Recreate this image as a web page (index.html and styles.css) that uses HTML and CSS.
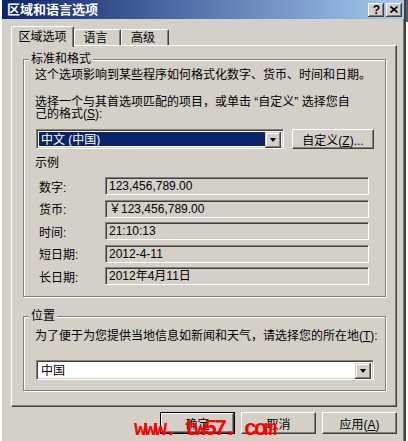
FILE: index.html
```html
<!DOCTYPE html>
<html lang="zh-CN">
<head>
<meta charset="UTF-8" />
<meta name="viewport" content="width=device-width, initial-scale=1" />
<title>区域和语言选项</title>
<link rel="stylesheet" href="styles.css">
</head>
<body>

<div class="window">
  <div class="titlebar">
    <span class="title">区域和语言选项</span>
    <div class="caption-btns">
      <span class="cbtn cbtn-help">?</span>
      <span class="cbtn">
        <svg width="8" height="7" viewBox="0 0 8 7">
          <path d="M0.5 0.5 L7.5 6.5 M7.5 0.5 L0.5 6.5" stroke="#000" stroke-width="1.6" fill="none" />
        </svg>
      </span>
    </div>
  </div>

  <div class="body">
    <div class="tabs">
      <div class="tab active">区域选项</div>
      <div class="tab tab-lang">语言</div>
      <div class="tab tab-adv">高级</div>
    </div>

    <div class="panel">
      <div class="group group-format">
        <span class="legend">标准和格式</span>
        <p class="desc">这个选项影响到某些程序如何格式化数字、货币、时间和日期。</p>
        <p class="desc desc-pick">选择一个与其首选项匹配的项目，或单击 “自定义” 选择您自<br>己的格式(<u>S</u>):</p>

        <div class="pick-row">
          <div class="combo combo-locale">
            <span class="combo-value selected">中文 (中国)</span>
            <span class="combo-arrow"><span class="tri"></span></span>
          </div>
          <button class="btn btn-custom">自定义(<u>Z</u>)...</button>
        </div>

        <div class="sample-title">示例</div>
        <div class="samples">
          <div class="sample"><span class="sample-label">数字:</span><span class="field">123,456,789.00</span></div>
          <div class="sample"><span class="sample-label">货币:</span><span class="field">￥123,456,789.00</span></div>
          <div class="sample"><span class="sample-label">时间:</span><span class="field">21:10:13</span></div>
          <div class="sample"><span class="sample-label">短日期:</span><span class="field">2012-4-11</span></div>
          <div class="sample"><span class="sample-label">长日期:</span><span class="field">2012年4月11日</span></div>
        </div>
      </div>

      <div class="group group-loc">
        <span class="legend">位置</span>
        <p class="desc">为了便于为您提供当地信息如新闻和天气，请选择您的所在地(<u>T</u>):</p>
        <div class="combo combo-loc">
          <span class="combo-value">中国</span>
          <span class="combo-arrow"><span class="tri"></span></span>
        </div>
      </div>
    </div>

    <div class="actions">
      <button class="btn btn-default">确定</button>
      <button class="btn">取消</button>
      <button class="btn">应用(<u>A</u>)</button>
    </div>
  </div>

  <div class="watermark">www. tw57. com</div>
</div>

</body>
</html>
```

FILE: styles.css
```css
html {
  background: linear-gradient(to bottom, #5a5a5a 0, #5a5a5a 22px, #fff 22px);
}
body {
  margin: 0;
  height: 441px;
  overflow: hidden;
  font-family: "Liberation Sans", "Noto Sans CJK SC", sans-serif;
  font-size: 12px;
  color: #000;
}
p { margin: 0; }

.window {
  position: relative;
  width: 402px;
  height: 441px;
  background: #d4d0c8;
  border-left: 2px solid #fff;
  border-right: 2px solid #404040;
  box-shadow: inset 1px 0 #d4d0c8, inset -1px 0 #808080;
}

/* title bar */
.titlebar {
  height: 19px;
  display: flex;
  align-items: center;
  justify-content: space-between;
  padding: 0 2px 0 5px;
  background: linear-gradient(to right, #0a246a, #a6caf0);
}
.title {
  color: #fff;
  font-weight: bold;
  font-size: 13px;
  line-height: 15px;
}
.caption-btns {
  display: flex;
  gap: 2px;
}
.cbtn {
  width: 16px;
  height: 14px;
  display: flex;
  align-items: center;
  justify-content: center;
  background: #d4d0c8;
  box-shadow: inset -1px -1px #404040, inset 1px 1px #fff, inset -2px -2px #808080;
  font-weight: bold;
  font-size: 12px;
  line-height: 14px;
}
.cbtn-help {
  font-family: "Liberation Sans", sans-serif;
  padding-left: 1px;
  box-sizing: border-box;
}

.body {
  padding: 7px 7px 0 9px;
}

/* tabs */
.tabs {
  display: flex;
  height: 19px;
  align-items: flex-start;
}
.tab {
  box-sizing: border-box;
  height: 16px;
  margin-top: 3px;
  padding-top: 1px;
  line-height: 14px;
  text-align: center;
  border-top: 1px solid #fff;
  border-left: 1px solid #fff;
  border-right: 1px solid #404040;
  border-radius: 2px 2px 0 0;
  box-shadow: inset -1px 0 #808080;
}
.tab.active {
  position: relative;
  z-index: 1;
  width: 63px;
  height: 21px;
  margin-top: 0;
  padding-top: 3px;
  background: #d4d0c8;
}
.tab-lang { width: 47px; padding-right: 4px; }
.tab-adv { width: 48px; padding-right: 4px; }

/* tab page */
.panel {
  box-sizing: border-box;
  width: 386px;
  height: 362px;
  padding: 13px 10px 0 11px;
  border: 1px solid;
  border-color: #fff #404040 #404040 #fff;
  box-shadow: inset -1px -1px #808080;
}

.group {
  position: relative;
  box-sizing: border-box;
  border: 1px solid #808080;
  box-shadow: inset 1px 1px #fff, 1px 1px #fff;
  padding: 0 11px;
}
.legend {
  position: absolute;
  top: -7px;
  left: 5px;
  padding: 0 2px;
  background: #d4d0c8;
  line-height: 12px;
}
.desc {
  line-height: 12px;
  white-space: nowrap;
}

.group-format {
  height: 238px;
  padding-top: 9px;
}
.desc-pick {
  margin-top: 15px;
}

.pick-row {
  display: flex;
  gap: 8px;
  margin: 9px 0 0 1px;
}

/* combo boxes */
.combo {
  box-sizing: border-box;
  height: 20px;
  display: flex;
  padding: 2px;
  background: #fff;
  border: 1px solid;
  border-color: #808080 #fff #fff #808080;
  box-shadow: inset 1px 1px #404040, inset -1px -1px #d4d0c8;
}
.combo-locale { width: 251px; }
.combo-value {
  flex: 1;
  line-height: 16px;
  padding-left: 2px;
}
.combo-value.selected {
  background: #0a246a;
  color: #fff;
}
.combo-arrow {
  width: 16px;
  height: 16px;
  display: flex;
  align-items: center;
  justify-content: center;
  background: #d4d0c8;
  box-shadow: inset -1px -1px #404040, inset 1px 1px #d4d0c8, inset -2px -2px #808080, inset 2px 2px #fff;
}
.tri {
  width: 0;
  height: 0;
  border-left: 3.5px solid transparent;
  border-right: 3.5px solid transparent;
  border-top: 4px solid #000;
}

/* push buttons */
.btn {
  box-sizing: border-box;
  height: 22px;
  width: 75px;
  padding: 0;
  font: inherit;
  color: #000;
  background: #d4d0c8;
  border: 1px solid;
  border-color: #fff #404040 #404040 #fff;
  box-shadow: inset -1px -1px #808080;
}
.btn-custom {
  width: 83px;
  height: 20px;
}
.btn-default {
  border: 1px solid #000;
  box-shadow: inset -1px -1px #404040, inset 1px 1px #fff, inset -2px -2px #808080;
}

/* samples */
.sample-title {
  margin-top: 8px;
  line-height: 12px;
}
.samples {
  display: flex;
  flex-direction: column;
  gap: 4.5px;
  margin-top: 8px;
}
.sample {
  display: flex;
  align-items: center;
}
.sample-label {
  width: 70px;
  padding-left: 4px;
  box-sizing: border-box;
}
.field {
  box-sizing: border-box;
  width: 264px;
  height: 18px;
  padding-left: 3px;
  line-height: 14px;
  border: 1px solid;
  border-color: #808080 #fff #fff #808080;
  box-shadow: inset 1px 1px #404040, inset -1px -1px #d4d0c8;
  padding-top: 1px;
}

.group-loc {
  height: 75px;
  margin-top: 19px;
  padding-top: 13px;
}
.combo-loc {
  width: 338px;
  margin: 18px 0 0 1px;
}

.actions {
  display: flex;
  justify-content: flex-end;
  gap: 6px;
  margin-top: 5px;
}

.watermark {
  position: absolute;
  left: 132px;
  top: 419px;
  font-family: "Liberation Mono", monospace;
  font-weight: bold;
  font-size: 22px;
  line-height: 22px;
  letter-spacing: -3.2px;
  color: #ff0000;
  white-space: nowrap;
}
```
